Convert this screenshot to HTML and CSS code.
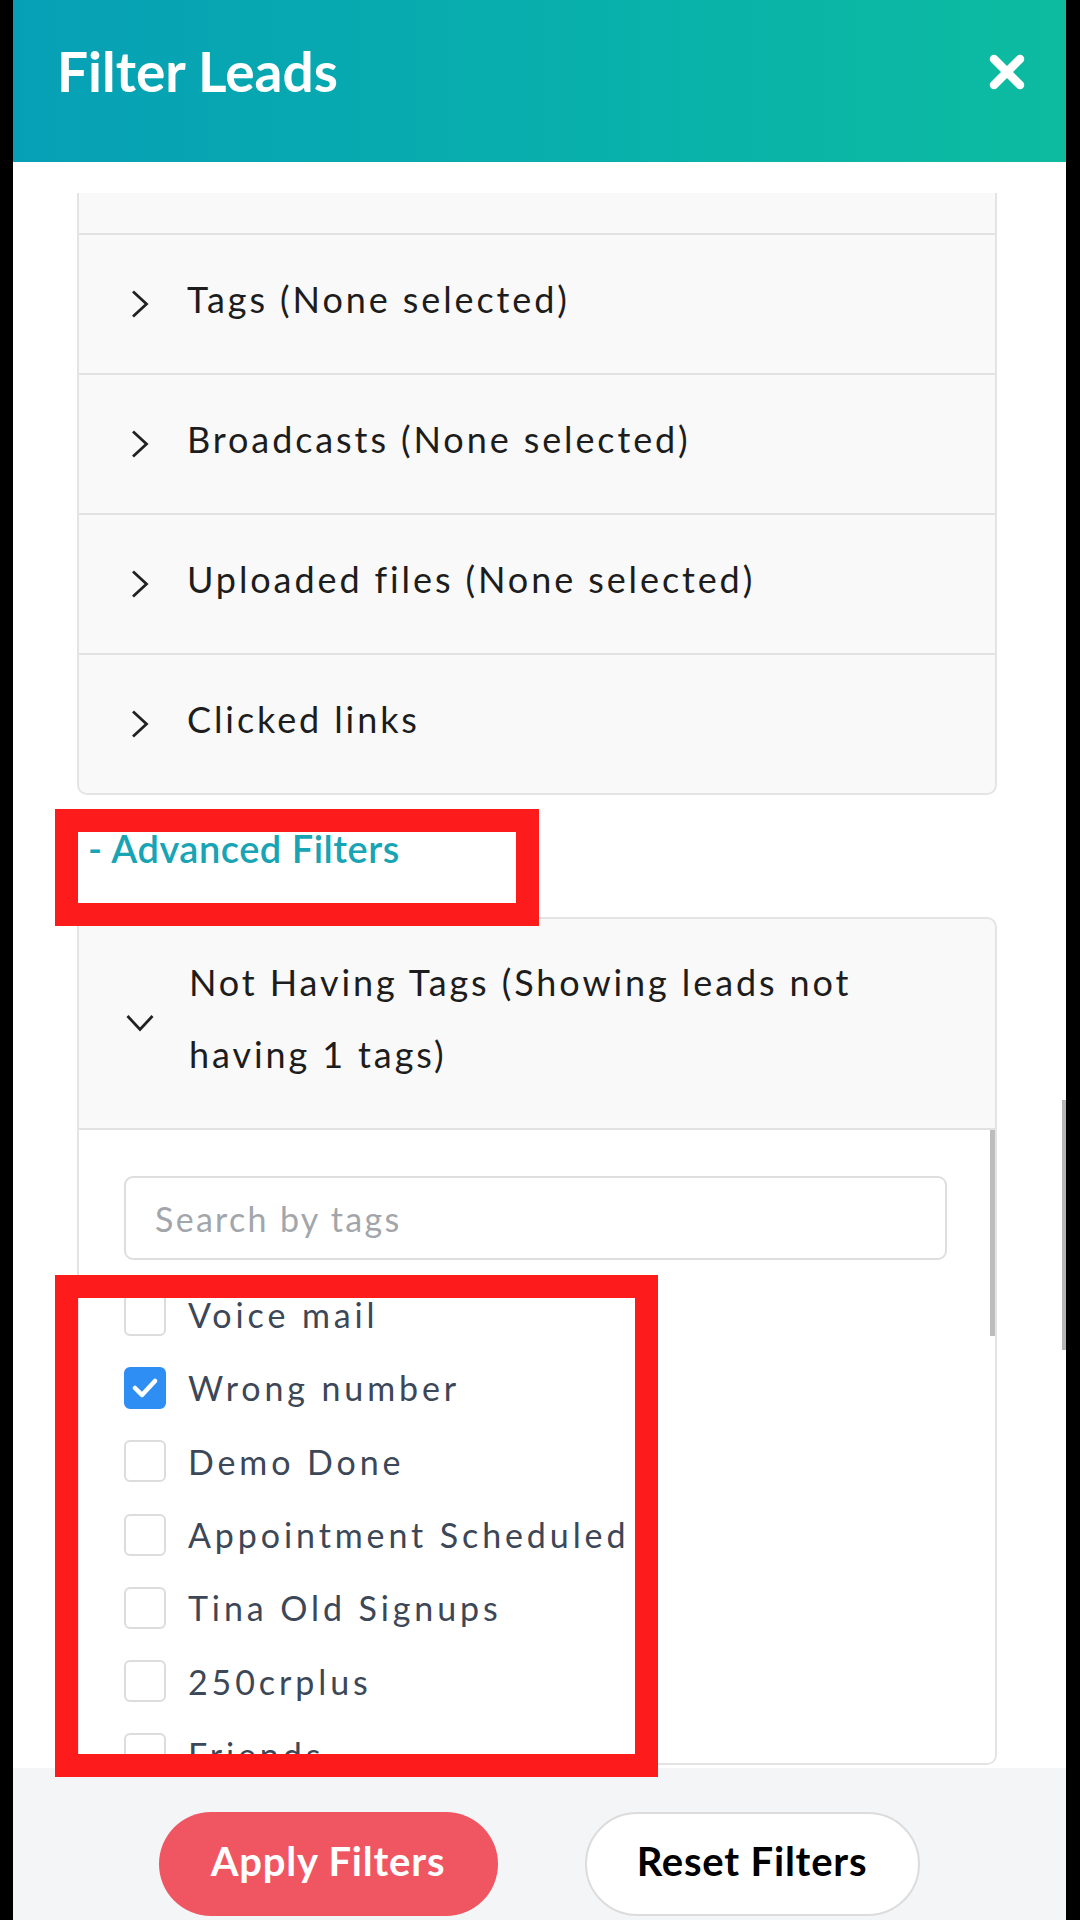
FILE: index.html
```html
<!DOCTYPE html>
<html lang="en">
<head>
<meta charset="utf-8">
<title>Filter Leads</title>
<link rel="stylesheet" href="styles.css">
</head>
<body>
<div class="modal">
  <header class="head">
    <h1 class="title">Filter Leads</h1>
    <button class="close" aria-label="Close">
      <svg width="38" height="38" viewBox="0 0 38 38"><path d="M6 6 L32 32 M32 6 L6 32" stroke="#fff" stroke-width="8.5" stroke-linecap="round" fill="none"/></svg>
    </button>
  </header>

  <main class="body">
    <div class="scroll">
      <div class="card card-basic">
        <div class="row row-cut"></div>
        <div class="row">
          <svg class="chev" width="18" height="28" viewBox="0 0 18 28"><path d="M2 1.5 L15.5 14 L2 26.5" stroke="#222" stroke-width="2.8" fill="none"/></svg>
          <span class="row-label">Tags (None selected)</span>
        </div>
        <div class="row">
          <svg class="chev" width="18" height="28" viewBox="0 0 18 28"><path d="M2 1.5 L15.5 14 L2 26.5" stroke="#222" stroke-width="2.8" fill="none"/></svg>
          <span class="row-label">Broadcasts (None selected)</span>
        </div>
        <div class="row">
          <svg class="chev" width="18" height="28" viewBox="0 0 18 28"><path d="M2 1.5 L15.5 14 L2 26.5" stroke="#222" stroke-width="2.8" fill="none"/></svg>
          <span class="row-label">Uploaded files (None selected)</span>
        </div>
        <div class="row">
          <svg class="chev" width="18" height="28" viewBox="0 0 18 28"><path d="M2 1.5 L15.5 14 L2 26.5" stroke="#222" stroke-width="2.8" fill="none"/></svg>
          <span class="row-label">Clicked links</span>
        </div>
      </div>

      <div class="adv-link">- Advanced Filters</div>

      <div class="card card-adv">
        <div class="adv-head">
          <svg class="chev-down" width="28" height="18" viewBox="0 0 28 18"><path d="M1.5 2 L14 15.5 L26.5 2" stroke="#222" stroke-width="2.8" fill="none"/></svg>
          <span class="adv-title">Not Having Tags (Showing leads not having 1 tags)</span>
        </div>
        <div class="tag-panel">
          <input class="search" type="text" placeholder="Search by tags">
          <ul class="tag-list">
            <li class="tag"><span class="box"></span><span class="tag-name">Voice mail</span></li>
            <li class="tag"><span class="box box-on"><svg width="26" height="20" viewBox="0 0 26 20"><path d="M3 10 L10 17 L23 3" stroke="#fff" stroke-width="4.5" stroke-linecap="round" stroke-linejoin="round" fill="none"/></svg></span><span class="tag-name">Wrong number</span></li>
            <li class="tag"><span class="box"></span><span class="tag-name">Demo Done</span></li>
            <li class="tag"><span class="box"></span><span class="tag-name">Appointment Scheduled</span></li>
            <li class="tag"><span class="box"></span><span class="tag-name">Tina Old Signups</span></li>
            <li class="tag"><span class="box"></span><span class="tag-name">250crplus</span></li>
            <li class="tag"><span class="box"></span><span class="tag-name">Friends</span></li>
          </ul>
          <div class="panel-thumb"></div>
        </div>
      </div>
    </div>
  </main>

  <footer class="foot">
    <button class="btn btn-apply">Apply Filters</button>
    <button class="btn btn-reset">Reset Filters</button>
  </footer>

  <div class="mark mark-adv"></div>
  <div class="mark mark-tags"></div>
  <div class="page-thumb"></div>
</div>
</body>
</html>
```

FILE: styles.css
```css
* { box-sizing: border-box; }

html, body {
  margin: 0;
  padding: 0;
  background: #000;
  height: 1920px;
  overflow: hidden;
}

.modal {
  position: relative;
  width: 1053px;
  height: 1920px;
  margin-left: 13px;
  display: flex;
  flex-direction: column;
  background: #fff;
  font-family: Lato, "Open Sans", sans-serif;
  overflow: hidden;
}

/* header */
.head {
  flex: 0 0 162px;
  display: flex;
  align-items: flex-start;
  justify-content: space-between;
  padding: 36px 40px 0 44px;
  background: linear-gradient(90deg, #06a0b6 0%, #08b0ab 55%, #0dbba0 100%);
}

.title {
  margin: 0;
  color: #fff;
  font-size: 55px;
  font-weight: 700;
  line-height: 70px;
  letter-spacing: 0;
}

.close {
  margin-top: 17px;
  padding: 0;
  border: 0;
  background: none;
  width: 38px;
  height: 38px;
}

/* body */
.body {
  flex: 0 0 1606px;
  padding-top: 31px;
  background: #fff;
}

.scroll {
  height: 1575px;
  overflow: hidden;
  padding: 0 69px 0 64px;
}

.card {
  border: 2px solid #e4e4e4;
  border-radius: 10px;
  background: #f9f9f9;
  overflow: hidden;
}

.card-basic {
  margin-top: -102px;
}

.row {
  height: 140px;
  display: flex;
  align-items: center;
  padding-left: 52px;
}

.row + .row {
  border-top: 2px solid #e2e2e2;
}

.chev {
  flex: 0 0 auto;
  margin-right: 38px;
}

.row-label {
  font-size: 36px;
  color: #1d1d1d;
  letter-spacing: 2.9px;
  margin-bottom: 10px;
}

.adv-link {
  margin: 30px 0 46px 11px;
  font-size: 38px;
  line-height: 46px;
  font-weight: 600;
  color: #18a4b4;
  letter-spacing: 0.5px;
}

/* advanced card */
.card-adv {
  height: 848px;
  display: flex;
  flex-direction: column;
}

.adv-head {
  flex: 0 0 211px;
  display: flex;
  align-items: center;
  padding-left: 47px;
  padding-bottom: 12px;
  border-bottom: 2px solid #e2e2e2;
}

.chev-down {
  flex: 0 0 auto;
  margin-right: 35px;
  margin-top: 10px;
}

.adv-title {
  max-width: 700px;
  font-size: 36px;
  line-height: 72px;
  color: #1d1d1d;
  letter-spacing: 2.9px;
}

.tag-panel {
  position: relative;
  flex: 1 1 auto;
  background: #fff;
  padding: 46px 48px 0 45px;
  overflow: hidden;
}

.search {
  display: block;
  width: 100%;
  height: 84px;
  border: 2px solid #dedede;
  border-radius: 9px;
  padding: 0 0 0 29px;
  font-family: Lato, "Open Sans", sans-serif;
  font-size: 34px;
  letter-spacing: 2.3px;
  color: #333;
  background: #fff;
  outline: none;
}

.search::placeholder {
  color: #a2a6ab;
}

.tag-list {
  list-style: none;
  margin: 18px 0 0 0;
  padding: 0;
}

.tag {
  height: 73.3px;
  display: flex;
  align-items: center;
}

.box {
  flex: 0 0 42px;
  width: 42px;
  height: 42px;
  border: 2px solid #dcdcdc;
  border-radius: 6px;
  background: #fff;
  margin-right: 22px;
  display: flex;
  align-items: center;
  justify-content: center;
}

.box-on {
  background: #2e8ef3;
  border-color: #2e8ef3;
}

.tag-name {
  font-size: 34px;
  color: #3c4757;
  letter-spacing: 3.9px;
  white-space: nowrap;
}

.panel-thumb {
  position: absolute;
  top: 0;
  right: 0;
  width: 5px;
  height: 206px;
  background: #bdbdbd;
}

/* footer */
.foot {
  flex: 1 1 auto;
  display: flex;
  justify-content: center;
  align-items: flex-start;
  gap: 87px;
  padding-top: 44px;
  padding-right: 1px;
  background: #f4f5f7;
}

.btn {
  height: 104px;
  border-radius: 52px;
  font-family: Lato, "Open Sans", sans-serif;
  font-size: 40px;
  font-weight: 700;
  letter-spacing: 0.8px;
  padding: 0 0 6px 0;
}

.btn-apply {
  width: 339px;
  background: #ef5662;
  border: 0;
  color: #fff;
}

.btn-reset {
  width: 335px;
  background: #fff;
  border: 2px solid #dcdcdc;
  color: #000;
}

/* annotation overlays */
.mark {
  position: absolute;
  border: 23px solid #fe1b1b;
  pointer-events: none;
}

.mark-adv {
  left: 42px;
  top: 809px;
  width: 484px;
  height: 117px;
}

.mark-tags {
  left: 42px;
  top: 1275px;
  width: 603px;
  height: 502px;
}

.page-thumb {
  position: absolute;
  right: 0;
  top: 1100px;
  width: 4px;
  height: 250px;
  background: #b5b5b5;
}
```
